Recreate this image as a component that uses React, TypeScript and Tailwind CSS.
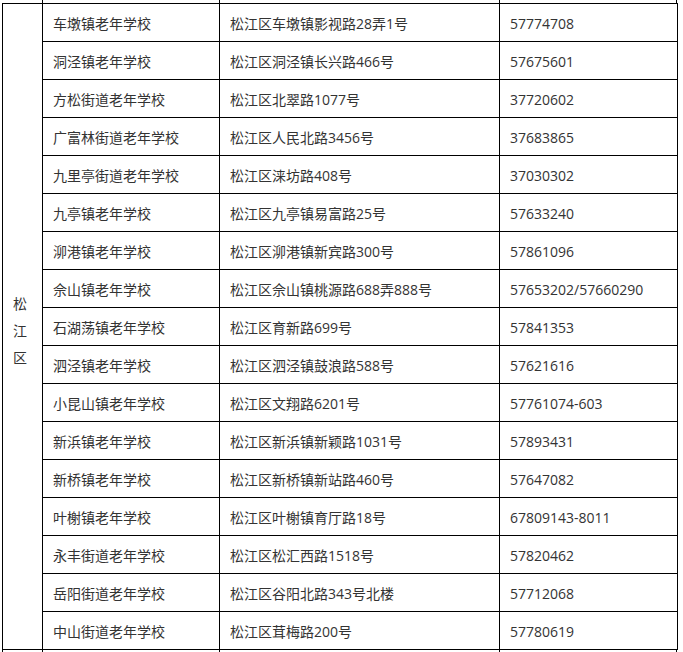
const rows: [string, string, string][] = [
  ['车墩镇老年学校', '松江区车墩镇影视路28弄1号', '57774708'],
  ['洞泾镇老年学校', '松江区洞泾镇长兴路466号', '57675601'],
  ['方松街道老年学校', '松江区北翠路1077号', '37720602'],
  ['广富林街道老年学校', '松江区人民北路3456号', '37683865'],
  ['九里亭街道老年学校', '松江区涞坊路408号', '37030302'],
  ['九亭镇老年学校', '松江区九亭镇易富路25号', '57633240'],
  ['泖港镇老年学校', '松江区泖港镇新宾路300号', '57861096'],
  ['佘山镇老年学校', '松江区佘山镇桃源路688弄888号', '57653202/57660290'],
  ['石湖荡镇老年学校', '松江区育新路699号', '57841353'],
  ['泗泾镇老年学校', '松江区泗泾镇鼓浪路588号', '57621616'],
  ['小昆山镇老年学校', '松江区文翔路6201号', '57761074-603'],
  ['新浜镇老年学校', '松江区新浜镇新颖路1031号', '57893431'],
  ['新桥镇老年学校', '松江区新桥镇新站路460号', '57647082'],
  ['叶榭镇老年学校', '松江区叶榭镇育厅路18号', '67809143-8011'],
  ['永丰街道老年学校', '松江区松汇西路1518号', '57820462'],
  ['岳阳街道老年学校', '松江区谷阳北路343号北楼', '57712068'],
  ['中山街道老年学校', '松江区茸梅路200号', '57780619'],
]

function Strip({ withLeft }: { withLeft: boolean }) {
  return (
    <div className="flex h-[3px]">
      <div className={withLeft ? 'ml-[2px] w-[40px] border-l border-black' : 'w-[42px]'} />
      <div className="w-[177px] border-l border-black" />
      <div className="w-[280px] border-l border-black" />
      <div className="w-[178px] border-l border-r border-black" />
    </div>
  )
}

export default function App() {
  return (
    <div
      className="h-[652px] w-[683px] overflow-hidden bg-white text-[14px] text-[#333]"
      style={{ fontFamily: '"Open Sans", "Noto Sans CJK SC", sans-serif' }}
    >
      <Strip withLeft={false} />
      <div className="ml-[2px] flex w-[676px] border border-black">
        <div className="flex w-[40px] flex-col justify-center border-r border-black pl-[10px] pt-[7px] leading-[27px]">
          <span>松</span>
          <span>江</span>
          <span>区</span>
        </div>
        <div className="flex flex-1 flex-col">
          {rows.map(([name, addr, tel], i) => (
            <div
              key={name}
              className={
                i === rows.length - 1
                  ? 'flex h-[37px]'
                  : 'flex h-[38px] border-b border-black'
              }
            >
              <div className="flex w-[177px] items-center border-r border-black pl-[10px] pt-[2px]">
                {name}
              </div>
              <div className="flex w-[280px] items-center border-r border-black pl-[10px] pt-[2px]">
                {addr}
              </div>
              <div className="flex flex-1 items-center pl-[10px] pt-[2px]">{tel}</div>
            </div>
          ))}
        </div>
      </div>
      <Strip withLeft={true} />
    </div>
  )
}
